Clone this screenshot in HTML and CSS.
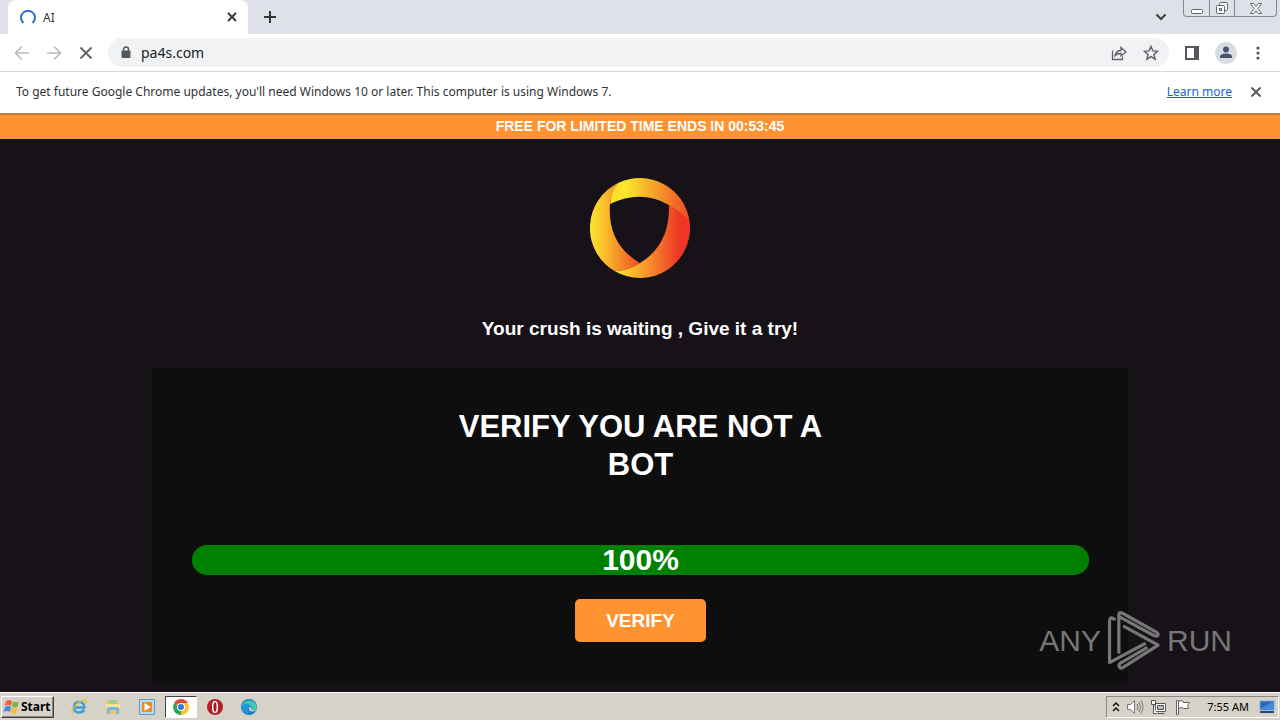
FILE: index.html
```html
<!DOCTYPE html>
<html lang="en">
<head>
<meta charset="utf-8">
<title>AI</title>
<link rel="stylesheet" href="styles.css">
</head>
<body>
<header class="browser">
  <div class="tabstrip">
    <div class="tab">
      <svg width="16" height="16" viewBox="0 0 16 16" fill="none" stroke="#2b6fc9" stroke-width="2"><path d="M3.500 14A7 7 0 1 1 12.500 14"/></svg>
      <span class="tab-title">AI</span>
      <button class="icon" aria-label="Close tab"><svg width="10" height="10" viewBox="0 0 10 10" stroke="#333" stroke-width="1.800"><path d="M1 1l8 8M9 1l-8 8"/></svg></button>
    </div>
    <button class="icon new-tab" aria-label="New tab"><svg width="12" height="12" viewBox="0 0 12 12" stroke="#333" stroke-width="2"><path d="M6 0v12M0 6h12"/></svg></button>
    <button class="icon tab-search" aria-label="Search tabs"><svg width="12" height="8" viewBox="0 0 12 8" fill="none" stroke="#3c4043" stroke-width="2"><path d="M1.500 1.500L6 6l4.500-4.500"/></svg></button>
    <div class="window-buttons">
      <button aria-label="Minimize"><svg width="14" height="14" viewBox="0 0 14 14" fill="#fff" stroke="#63666c"><rect x="1.500" y="8.500" width="11" height="4" rx="1"/></svg></button>
      <button aria-label="Restore"><svg width="14" height="14" viewBox="0 0 14 14" fill="#f7f8fa" stroke="#63666c"><rect x="4.500" y="1.500" width="8" height="8" rx="1"/><rect x="1.500" y="4.500" width="8" height="8" rx="1"/><rect x="4.500" y="7.500" width="2" height="2"/></svg></button>
      <button class="wide" aria-label="Close"><svg width="14" height="14" viewBox="0 0 14 14" fill="#fff" stroke="#63666c"><path d="M1.500 2.500h3L7 5.500l2.500-3h3L9 7.500l3.500 5h-3L7 9.500l-2.500 3h-3l3.500-5z"/></svg></button>
    </div>
  </div>
  <div class="toolbar">
    <button class="icon" aria-label="Back"><svg width="16" height="16" viewBox="0 0 16 16" fill="none" stroke="#b9bbbe" stroke-width="1.700"><path d="M15 8H2M8 1.500L1.500 8 8 14.500"/></svg></button>
    <button class="icon" aria-label="Forward"><svg width="16" height="16" viewBox="0 0 16 16" fill="none" stroke="#b9bbbe" stroke-width="1.700"><path d="M1 8h13M8 1.500L14.500 8 8 14.500"/></svg></button>
    <button class="icon" aria-label="Stop"><svg width="16" height="16" viewBox="0 0 16 16" stroke="#5f6368" stroke-width="1.800"><path d="M2.500 2.500l11 11M13.500 2.500l-11 11"/></svg></button>
    <div class="omnibox">
      <svg width="10" height="13" viewBox="0 0 10 13"><rect x="0.500" y="4.500" width="9" height="7.500" rx="1" fill="#55585d"/><path d="M2.500 5V3.500a2.500 2.500 0 0 1 5 0V5" fill="none" stroke="#55585d" stroke-width="1.500"/></svg>
      <input class="url" type="text" value="pa4s.com" aria-label="Address">
      <button class="icon" aria-label="Share"><svg width="16" height="16" viewBox="0 0 16 16" fill="none" stroke="#5f6368" stroke-width="1.300"><path d="M1.500 5.500v9h10v-3M4 10.500C5 7 7 5.500 10 5.500V2.500L15 7l-5 4V8.500C7.500 8.500 5.500 9 4 10.500z"/></svg></button>
      <button class="icon" aria-label="Bookmark"><svg width="16" height="16" viewBox="0 0 16 16" fill="none" stroke="#5f6368" stroke-width="1.500"><path d="M8 1.500l1.900 4.400 4.700.4-3.600 3.100 1.100 4.700L8 11.600l-4.100 2.500L5 9.400 1.400 6.300l4.700-.4z"/></svg></button>
    </div>
    <button class="icon" aria-label="Side panel"><svg width="14" height="14" viewBox="0 0 14 14"><path d="M1 1h12v12H1z" fill="none" stroke="#55585d" stroke-width="2"/><path d="M9 1h4v12H9z" fill="#55585d"/></svg></button>
    <button class="icon" aria-label="Profile"><svg width="22" height="22" viewBox="0 0 22 22"><circle cx="11" cy="11" r="11" fill="#dadce3"/><circle cx="11" cy="7.500" r="3" fill="#47526b"/><path d="M5 16v-1.500C5 12.500 8 11.500 11 11.500s6 1 6 3V16z" fill="#47526b"/></svg></button>
    <button class="icon menu" aria-label="Menu"><svg width="4" height="14" viewBox="0 0 4 14" fill="#55585d"><circle cx="2" cy="2" r="1.600"/><circle cx="2" cy="7" r="1.600"/><circle cx="2" cy="12" r="1.600"/></svg></button>
  </div>
  <div class="infobar">
    <span>To get future Google Chrome updates, you'll need Windows 10 or later. This computer is using Windows 7.</span>
    <a href="#">Learn more</a>
    <button class="icon" aria-label="Dismiss"><svg width="10" height="10" viewBox="0 0 10 10" stroke="#55585d" stroke-width="2"><path d="M0.500 0.500l9 9M9.500 0.500l-9 9"/></svg></button>
  </div>
</header>

<main class="page">
  <div class="promo">FREE FOR LIMITED TIME ENDS IN 00:53:45</div>
  <svg class="logo" width="100" height="100" viewBox="0 0 100 100">
    <defs>
      <linearGradient id="left" x1="0" x2="1"><stop offset="0" stop-color="#fae62c"/><stop offset="0.250" stop-color="#fbc52c"/><stop offset="1" stop-color="#ee4a28"/></linearGradient>
      <linearGradient id="top" x1="0" x2="1"><stop offset="0" stop-color="#fcdf2b"/><stop offset="0.200" stop-color="#fce72b"/><stop offset="1" stop-color="#ef4a28"/></linearGradient>
      <linearGradient id="right" x1="0" x2="1"><stop offset="0" stop-color="#fde62b"/><stop offset="0.400" stop-color="#f99a2b"/><stop offset="0.850" stop-color="#ee3825"/></linearGradient>
    </defs>
    <path fill="url(#left)" d="M28 5A50 50 0 0 0 25 93.300Q40 92 50 85Q17 66 20 26Q21 15 28 5z"/>
    <path fill="url(#top)" d="M28 5.100A50 50 0 0 1 99.500 43.500Q91 35 79 27Q51 11 20 26Q21 14 28 5.100z"/>
    <path fill="url(#right)" d="M79 27Q92 34 99.500 43A50 50 0 0 1 25 93.300Q40 92 50 85Q80 67 79 27z"/>
  </svg>
  <p class="tagline">Your crush is waiting , Give it a try!</p>
  <section class="panel">
    <h1>VERIFY YOU ARE NOT A BOT</h1>
    <div class="progress" role="progressbar" aria-label="Verification" aria-valuenow="100"><div class="progress-fill" style="width:100%">100%</div></div>
    <button class="verify">VERIFY</button>
  </section>
  <div class="watermark">
    <span>ANY</span>
    <svg width="56" height="63" viewBox="265 25 174 195" fill="none" stroke="#777" stroke-width="10" stroke-linejoin="round">
      <path d="M293 60Q290 52 280 52Q276 56 276 62V191L388 131"/>
      <path d="M305 163V41Q305 33 315 37L420 96Q430 102 426 107Q422 111 414 107L307 49"/>
      <path d="M318 77L427 137L318 206Q311 212 307 205Q302 198 311 192L394 144"/>
    </svg>
    <span>RUN</span>
  </div>
</main>

<footer class="taskbar">
  <button class="start"><svg width="17" height="16" viewBox="0 0 17 16"><path d="M3 2Q6 0 9 2L8 7Q5 5 2 7z" fill="#ed6337"/><path d="M10 2.500Q13 4 16 2.500L14.500 8Q12 9 9 7.500z" fill="#7cb342"/><path d="M2 8Q5 6 8 8L7 13Q4 11 0.500 13z" fill="#3f8edc"/><path d="M9 8.500Q12 10 14.500 9L13 14Q10 15 7.500 13.500z" fill="#f5bd2b"/></svg>Start</button>
  <nav class="apps">
    <button aria-label="Internet Explorer"><svg width="18" height="18" viewBox="0 0 18 18" fill="none"><path d="M4 9.500h10.500Q14 4 9 4T4 9.500q0 5 5 5 4 0 5-3" stroke="#3c9fdc" stroke-width="2.500"/><path d="M3 16C0 15 3 9 8 5c4-3 8-4 8-2 0 1-.5 2-1 3" stroke="#e3bd3d" stroke-width="1.300"/></svg></button>
    <button aria-label="Explorer"><svg width="18" height="18" viewBox="0 0 18 18"><path d="M2 3h6l1 2h7v11H2z" fill="#e9c85c"/><path d="M5 2h8v6H5z" fill="#9fce8a"/><path d="M2 6h14v4H2z" fill="#f6e49b"/><path d="M3 16v-5q0-2 2-2h8q2 0 2 2v5h-3v-4H6v4z" fill="#75b9df"/></svg></button>
    <button aria-label="Media Player"><svg width="18" height="18" viewBox="0 0 18 18"><path d="M1.500 1.500h15v15h-15z" fill="#b6dcf4" stroke="#5b9bcb"/><path d="M4 4h10v10H4z" fill="#f48a20"/><path d="M6.500 5v8L13 9z" fill="#fff"/></svg></button>
    <button class="active" aria-label="Chrome"><svg width="18" height="18" viewBox="0 0 18 18"><path d="M9 9L2.100 5A8 8 0 0 1 15.900 5z" fill="#df4a37"/><path d="M9 9V5H15.900A8 8 0 0 1 9 17z" fill="#f7c52d"/><path d="M9 9v8A8 8 0 0 1 2.100 5z" fill="#34a350"/><circle cx="9" cy="9" r="4" fill="#fff"/><circle cx="9" cy="9" r="3" fill="#3b76dc"/></svg></button>
    <button aria-label="Opera"><svg width="18" height="18" viewBox="0 0 18 18"><circle cx="9" cy="9" r="8" fill="#b71d24"/><ellipse cx="9" cy="9" rx="2.300" ry="5.500" fill="#a8181f" stroke="#fff" stroke-width="1.500"/></svg></button>
    <button aria-label="Edge"><svg width="18" height="18" viewBox="0 0 18 18"><circle cx="9" cy="9" r="8" fill="#1777c8"/><path d="M1.500 8A8 8 0 0 1 17 9c0 3-3 4-6 3 2-4-2-7-9.500-4z" fill="#43c5b0"/><path d="M1 9c3-5 9-4 10 0-4-1-4 4-1 6-4 2-9-1-9-6z" fill="#2496d8"/><path d="M9 9.500q3-1 2 2 3 2 6 0Q15 14 11 13.500 8 12 9 9.500z" fill="#d6d2c8"/></svg></button>
  </nav>
  <div class="tray">
    <svg width="8" height="12" viewBox="0 0 8 12" fill="none" stroke="#111" stroke-width="1.500"><path d="M1 5l3-3 3 3M1 10l3-3 3 3"/></svg>
    <svg width="18" height="16" viewBox="0 0 18 16" fill="#fff" stroke="#777"><path d="M1.500 5.500h3l4-4v13l-4-4h-3z"/><path d="M11 5q2 3 0 6M13 3q3 5 0 10M15 1.500q4 6.500 0 13" fill="none"/></svg>
    <svg width="18" height="16" viewBox="0 0 18 16" fill="#fff" stroke="#555"><path d="M5.500 4.500h10v8h-10zM7.500 14.500h7"/><path d="M1.500 1.500h4v4h-4zM3.500 5.500v9h3"/><path d="M7.500 6.500h6v4h-6z" fill="#bbb"/></svg>
    <svg width="18" height="16" viewBox="0 0 18 16" fill="#fff" stroke="#666"><path d="M2.500 15.500v-14h2v14zM4.500 2.500Q7 1 9.500 2.500v1h6l-2 3 1 3h-5q-2-2-5 0z"/></svg>
    <time>7:55 AM</time>
    <svg width="16" height="14" viewBox="0 0 16 14"><path d="M1 1h14v9H1z" fill="#2867bd" stroke="#7ca9df"/><path d="M2 8L14 2v7H2z" fill="#438bdc"/><path d="M1 11h14v2H1z" fill="#23487e"/></svg>
  </div>
</footer>
</body>
</html>
```
FILE: styles.css
```css
* { box-sizing: border-box; }
body {
  margin: 0;
  min-height: 100vh;
  display: flex;
  flex-direction: column;
  background: #161217;
  font-family: "Liberation Sans", Arial, sans-serif;
}
button { border: 0; padding: 0; background: none; font: inherit; }
svg { display: block; flex: none; }
.browser, .taskbar { font-family: "Noto Sans", Tahoma, sans-serif; font-size: 12px; color: #303236; }

.tabstrip { display: flex; align-items: flex-start; height: 34px; padding: 0 3px 0 8px; background: #dee1e8; }
.tab {
  display: flex; align-items: center; gap: 7px;
  width: 240px; height: 34px; padding: 0 11px 0 12px;
  background: #fff; border-radius: 8px 8px 0 0;
}
.tab-title { flex: 1; }
.new-tab { margin: 11px 0 0 16px; }
.tab-search { margin: 13px 16px 0 auto; }
.window-buttons { display: flex; height: 17px; border: 1px solid #85888f; border-top: 0; border-radius: 0 0 4px 4px; }
.window-buttons button { display: grid; place-items: center; width: 25px; }
.window-buttons button + button { border-left: 1px solid #85888f; }
.window-buttons .wide { width: 42px; }

.toolbar {
  display: flex; align-items: center; gap: 16px;
  height: 38px; padding: 0 20px 0 14px;
  background: #fff; border-bottom: 1px solid #d4d6d9;
}
.toolbar > .icon { flex: none; }
.toolbar > .menu { margin-left: 3px; }
.omnibox {
  flex: 1; display: flex; align-items: center; gap: 16px;
  height: 29px; margin-left: -2px; padding: 0 10px 0 13px;
  background: #f0f2f4; border-radius: 15px;
}
.url { flex: 1; min-width: 0; margin-left: -6px; padding: 0; border: 0; background: none; font: inherit; font-size: 14px; color: #202124; }

.infobar { display: flex; align-items: center; height: 41px; padding: 0 19px 2px 16px; background: #fff; }
.infobar a { margin: 0 19px 0 auto; color: #2065c4; }

.page {
  position: relative; flex: 1;
  display: flex; flex-direction: column; align-items: center;
  color: #fff; font-weight: 700;
}
.promo {
  align-self: stretch; padding: 3px 0 5px;
  border-top: 2px solid #c07c3b; background: #ff932f;
  font-size: 14px; line-height: 16px; text-align: center;
}
.logo { margin-top: 39px; }
.tagline { margin: 39px 0 27px; font-size: 19px; line-height: 24px; text-align: center; }
.panel {
  align-self: stretch; display: flex; flex-direction: column; align-items: center;
  margin: 0 152px 8px; padding: 40px 39px 42px 40px; background: #0e0e0e;
}
.panel h1 { max-width: 400px; margin: 0 0 61px; font-size: 31px; line-height: 38px; text-align: center; }
.progress { align-self: stretch; border-radius: 15px; background: #222; }
.progress-fill { border-radius: 15px; background: #008000; font-size: 30px; line-height: 30px; text-align: center; }
.verify {
  margin-top: 24px; padding: 10px 31px; border-radius: 5px;
  background: #ff932f; color: #fff; font-size: 19px; font-weight: 700; line-height: 23px;
}
.watermark {
  position: absolute; right: 48px; bottom: 20px;
  display: flex; align-items: center; gap: 5px;
  color: #777; font-size: 30px; font-weight: 400;
}

.taskbar {
  display: flex; align-items: center;
  height: 28px; padding: 0 1px;
  background: #d6d2c8; border-top: 1px solid #fff;
}
.start {
  display: flex; align-items: center; gap: 1px;
  height: 22px; padding: 0 2px 0 1px;
  border: 1px solid; border-color: #fff #404040 #404040 #fff;
  box-shadow: inset -1px -1px #888;
  color: #000; font-size: 12px; font-weight: 700;
}
.apps { display: flex; gap: 2px; margin-left: 9px; }
.apps button { display: grid; place-items: center; width: 32px; height: 22px; }
.apps .active { border: 1px solid; border-color: #404040 #fff #fff #404040; background: #fff; }
.tray {
  display: flex; align-items: center; gap: 6px;
  height: 22px; margin-left: auto; padding: 0 3px 0 5px;
  border: 1px solid; border-color: #888 #fff #fff #888;
}
.tray time { margin: 0 4px 0 9px; color: #000; font-size: 11px; }
```
